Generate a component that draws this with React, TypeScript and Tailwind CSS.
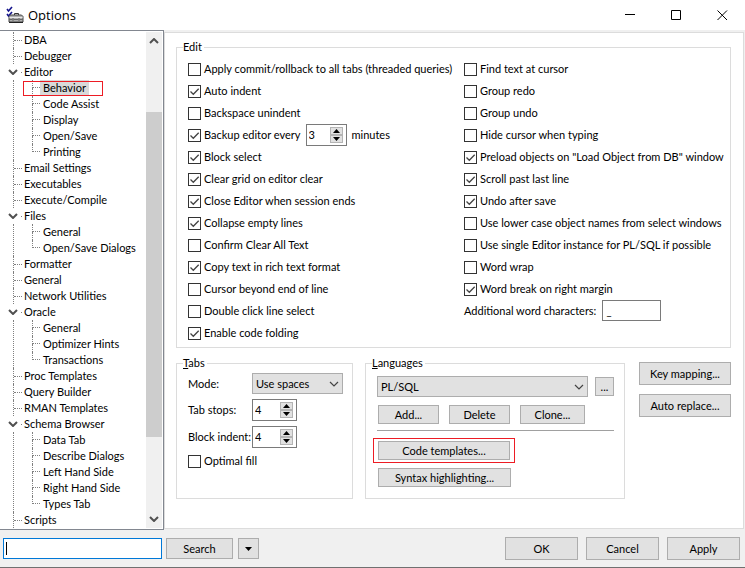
import { useId, useState } from "react";
import type { ReactNode } from "react";

type Node = { label: string; children?: string[] };

const tree: Node[] = [
  { label: "DBA" },
  { label: "Debugger" },
  { label: "Editor", children: ["Behavior", "Code Assist", "Display", "Open/Save", "Printing"] },
  { label: "Email Settings" },
  { label: "Executables" },
  { label: "Execute/Compile" },
  { label: "Files", children: ["General", "Open/Save Dialogs"] },
  { label: "Formatter" },
  { label: "General" },
  { label: "Network Utilities" },
  { label: "Oracle", children: ["General", "Optimizer Hints", "Transactions"] },
  { label: "Proc Templates" },
  { label: "Query Builder" },
  { label: "RMAN Templates" },
  {
    label: "Schema Browser",
    children: ["Data Tab", "Describe Dialogs", "Left Hand Side", "Right Hand Side", "Types Tab"],
  },
  { label: "Scripts" },
];

const leftOptions: [string, boolean][] = [
  ["Apply commit/rollback to all tabs (threaded queries)", false],
  ["Auto indent", true],
  ["Backspace unindent", false],
  ["Backup editor every", true],
  ["Block select", true],
  ["Clear grid on editor clear", true],
  ["Close Editor when session ends", true],
  ["Collapse empty lines", true],
  ["Confirm Clear All Text", false],
  ["Copy text in rich text format", true],
  ["Cursor beyond end of line", false],
  ["Double click line select", false],
  ["Enable code folding", true],
];

const rightOptions: [string, boolean][] = [
  ["Find text at cursor", false],
  ["Group redo", false],
  ["Group undo", false],
  ["Hide cursor when typing", false],
  ['Preload objects on "Load Object from DB" window', true],
  ["Scroll past last line", true],
  ["Undo after save", true],
  ["Use lower case object names from select windows", false],
  ["Use single Editor instance for PL/SQL if possible", false],
  ["Word wrap", false],
  ["Word break on right margin", true],
];

function Chevron({ className, up = false, bold = false }: { className: string; up?: boolean; bold?: boolean }) {
  return (
    <svg viewBox="0 0 10 6" className={className} fill="none" stroke="currentColor" strokeWidth={bold ? 2 : 1.2} aria-hidden="true">
      <path d={up ? "M1 5l4-4 4 4" : "M1 1l4 4 4-4"} />
    </svg>
  );
}

function Check({ label, checked }: { label: string; checked: boolean }) {
  return (
    <label className="flex h-[22px] items-center gap-[3px] whitespace-nowrap">
      <span className="grid">
        <input
          type="checkbox"
          defaultChecked={checked}
          className="peer col-start-1 row-start-1 size-[13px] appearance-none border border-[#333333] bg-white"
        />
        <svg
          viewBox="0 0 13 13"
          className="pointer-events-none invisible col-start-1 row-start-1 size-[13px] peer-checked:visible"
          fill="none"
          stroke="#444444"
          strokeWidth="1.3"
          aria-hidden="true"
        >
          <path d="M2.5 6.5l2.8 2.8 5.4-5.6" />
        </svg>
      </span>
      {label}
    </label>
  );
}

function Spinner({ id, initial, label, narrow = false }: { id?: string; initial: number; label?: string; narrow?: boolean }) {
  const [value, setValue] = useState(initial);
  const step = "grid h-[8px] w-[13px] place-items-center border border-[#b4b4b4] bg-[#e1e1e1]";
  return (
    <span className={`flex h-[22px] items-center border border-[#7a7a7a] bg-white pr-[3px] pl-[2px] ${narrow ? "w-[41px]" : "w-[45px]"}`}>
      <input
        id={id}
        aria-label={label}
        value={value}
        onChange={(e) => setValue(Number(e.target.value) || 0)}
        className="h-[16px] w-0 min-w-0 flex-1 bg-transparent outline-none"
      />
      <span className="flex flex-col">
        <button aria-label="Increase" className={step} onClick={() => setValue(value + 1)}>
          <svg viewBox="0 0 7 4" className="h-[4px] w-[7px]" aria-hidden="true">
            <path d="M3.5 0L7 4H0z" />
          </svg>
        </button>
        <button aria-label="Decrease" className={step} onClick={() => setValue(value - 1)}>
          <svg viewBox="0 0 7 4" className="h-[4px] w-[7px]" aria-hidden="true">
            <path d="M3.5 4L7 0H0z" />
          </svg>
        </button>
      </span>
    </span>
  );
}

function Dropdown({ id, label, options, className }: { id?: string; label?: string; options: string[]; className: string }) {
  return (
    <span className={`grid items-center ${className}`}>
      <select
        id={id}
        aria-label={label}
        className="col-start-1 row-start-1 h-[21px] w-full appearance-none border border-[#adadad] bg-[#e1e1e1] pr-[16px] pl-[3px]"
      >
        {options.map((o) => (
          <option key={o}>{o}</option>
        ))}
      </select>
      <Chevron className="pointer-events-none col-start-1 row-start-1 mr-[4px] h-[6px] w-[10px] justify-self-end text-[#444444]" />
    </span>
  );
}

function Button({ children, className, label }: { children: ReactNode; className: string; label?: string }) {
  return (
    <button aria-label={label} className={`flex items-center justify-center border border-[#adadad] bg-[#e1e1e1] whitespace-nowrap ${className}`}>
      {children}
    </button>
  );
}

function Group({ title, className, children }: { title: ReactNode; className: string; children: ReactNode }) {
  return (
    <fieldset className={`min-w-0 border border-[#dcdcdc] ${className}`}>
      <legend className="ml-[6px] h-[16px] pr-[2px]">{title}</legend>
      {children}
    </fieldset>
  );
}

function Tree() {
  return (
    <ul role="tree" aria-label="Option categories" className="min-w-0 flex-1">
      {tree.map((node) => (
        <li key={node.label} role="treeitem" aria-expanded={node.children ? true : undefined}>
          <div className="flex h-[16px] items-center whitespace-nowrap">
            {node.children ? (
              <>
                <Chevron bold className="ml-[8px] h-[6px] w-[10px] text-[#505050]" />
                <span className="mr-[2px] ml-[3px] w-px border-t border-[#808080]" />
              </>
            ) : (
              <span className="mr-[2px] ml-[13px] flex h-full w-[9px] items-center border-l border-dotted border-[#808080]">
                <span className="w-full border-t border-dotted border-[#808080]" />
              </span>
            )}
            {node.label}
          </div>
          {node.children && (
            <ul role="group" className="ml-[13px] border-l border-dotted border-[#808080] pl-[18px]">
              {node.children.map((child, i) => (
                <li key={child} role="treeitem" className="relative flex h-[16px] items-center whitespace-nowrap">
                  <span className="flex h-full w-[8px] flex-col">
                    <span className="h-[8px] border-b border-l border-dotted border-[#808080]" />
                    <span className={i < node.children!.length - 1 ? "h-[8px] border-l border-dotted border-[#808080]" : "h-[8px]"} />
                  </span>
                  <span className={child === "Behavior" ? "bg-[#d9d9d9] px-[3px]" : "px-[3px]"}>{child}</span>
                  {child === "Behavior" && <span className="absolute top-px -left-[9px] h-[15px] w-[80px] border border-[#ed1c24]" />}
                </li>
              ))}
            </ul>
          )}
        </li>
      ))}
    </ul>
  );
}

export default function App() {
  const id = useId();
  return (
    <div className="flex min-h-screen flex-col border-b border-[#707070] bg-[#f0f0f0] font-['Lato','Noto_Sans',sans-serif] text-[11px] leading-[16px] text-black">
      <header className="flex h-[30px] items-center bg-white pr-[17px] pl-[6px]">
        <svg viewBox="0 0 18 18" className="size-[18px]" aria-hidden="true">
          <path d="M1 3l1.500 2L6 1M1 8l1.500 2L6 6" fill="none" stroke="#14148c" strokeWidth="1.6" />
          <path d="M8.500 9V7.500h4V9" fill="none" stroke="#333" />
          <path d="M3 10.500l1.500-1.500h11l1.500 1.500v5.500H3z" fill="#b0b0b0" stroke="#444" />
          <path d="M3.500 11.500h13" stroke="#e8e8e8" />
          <path d="M3 13.500h14" stroke="#666" />
          <path d="M3 16.500h14" stroke="#222" />
          <path d="M6.500 12.500h1v2h-1zM12.500 12.500h1v2h-1z" fill="#eee" stroke="#555" strokeWidth=".6" />
        </svg>
        <h1 className="ml-[4px] font-['Open_Sans','Noto_Sans',sans-serif] text-[13px] leading-[20px]">Options</h1>
        <div className="ml-auto flex gap-[35px]">
          <button aria-label="Minimize">
            <svg viewBox="0 0 11 11" className="size-[11px]" stroke="black" aria-hidden="true">
              <path d="M0 4.500h10" />
            </svg>
          </button>
          <button aria-label="Maximize">
            <svg viewBox="0 0 11 11" className="size-[11px]" stroke="black" fill="none" aria-hidden="true">
              <path d="M.5.5h9v9h-9z" />
            </svg>
          </button>
          <button aria-label="Close">
            <svg viewBox="0 0 11 11" className="size-[11px]" stroke="black" aria-hidden="true">
              <path d="M.5.5l9.500 9.500M10 .5L.5 10" />
            </svg>
          </button>
        </div>
      </header>

      <div className="flex flex-1">
        <nav className="flex w-[164px] shrink-0 border-y border-r border-[#828790] bg-white py-px pr-px">
          <Tree />
          <div className="flex w-[16px] flex-col items-center bg-[#f0f0f0] py-[6px] text-[#505050]">
            <Chevron up bold className="h-[6px] w-[10px]" />
            <div className="mt-[68px] h-[325px] w-full bg-[#cdcdcd]" />
            <Chevron bold className="mt-auto h-[6px] w-[10px]" />
          </div>
        </nav>

        <main className="mt-[2px] mr-px mb-px flex min-w-0 flex-1 flex-col gap-[7px] border border-[#dcdcdc] bg-white pt-[6px] pr-[12px] pl-[11px]">
          <Group title="Edit" className="flex pb-[3px]">
            <div className="flex pt-[3px] pl-[11px]">
              <div className="w-[276px]">
                {leftOptions.map(([label, checked]) =>
                  label === "Backup editor every" ? (
                    <div key={label} className="flex items-center gap-[5px]">
                      <Check label={label} checked={checked} />
                      <Spinner narrow initial={3} label="Backup interval in minutes" />
                      <span>minutes</span>
                    </div>
                  ) : (
                    <Check key={label} label={label} checked={checked} />
                  ),
                )}
              </div>
              <div>
                {rightOptions.map(([label, checked]) => (
                  <Check key={label} label={label} checked={checked} />
                ))}
                <div className="flex items-center gap-[6px]">
                  <label htmlFor={`${id}-chars`}>Additional word characters:</label>
                  <input id={`${id}-chars`} defaultValue="_" className="h-[21px] w-[59px] border border-[#7a7a7a] bg-white px-[3px]" />
                </div>
              </div>
            </div>
          </Group>

          <div className="flex items-start">
            <Group title={<><u>T</u>abs</>} className="h-[144px] w-[177px] shrink-0">
              <div className="flex flex-col gap-[5px] pt-[2px] pr-[9px] pl-[11px]">
                <div className="flex items-center">
                  <label htmlFor={`${id}-mode`} className="w-[64px]">Mode:</label>
                  <Dropdown id={`${id}-mode`} options={["Use spaces", "Use tabs"]} className="flex-1" />
                </div>
                <div className="flex items-center">
                  <label htmlFor={`${id}-stops`} className="w-[64px] whitespace-nowrap">Tab stops:</label>
                  <Spinner id={`${id}-stops`} initial={4} />
                </div>
                <div className="flex items-center">
                  <label htmlFor={`${id}-indent`} className="w-[64px] whitespace-nowrap">Block indent:</label>
                  <Spinner id={`${id}-indent`} initial={4} />
                </div>
                <div className="-mt-[3px]">
                  <Check label="Optimal fill" checked={false} />
                </div>
              </div>
            </Group>

            <Group title={<><u>L</u>anguages</>} className="ml-[12px] h-[144px] min-w-[260px] flex-1">
              <div className="flex flex-col pt-[5px] pr-[10px] pl-[11px]">
                <div className="flex items-center gap-[7px]">
                  <Dropdown label="Language" options={["PL/SQL"]} className="flex-1" />
                  <Button className="h-[19px] w-[19px]" label="Browse languages">...</Button>
                </div>
                <div className="mt-[8px] flex gap-[10px] pl-px">
                  <Button className="h-[19px] w-[61px]">Add...</Button>
                  <Button className="h-[19px] w-[61px]">Delete</Button>
                  <Button className="h-[19px] w-[65px]">Clone...</Button>
                </div>
                <hr className="mt-[6px] border-[#a0a0a0]" />
                <div className="mt-[7px] -ml-[4px] w-[142px] border border-[#ed1c24] px-[4px] py-[2px]">
                  <Button className="h-[19px] w-full">Code templates...</Button>
                </div>
                <Button className="mt-[5px] ml-px h-[19px] w-[133px]">Syntax highlighting...</Button>
              </div>
            </Group>

            <div className="mt-[7px] ml-[14px] flex flex-col gap-[9px]">
              <Button className="h-[23px] w-[92px]">Key mapping...</Button>
              <Button className="h-[23px] w-[92px]">Auto replace...</Button>
            </div>
          </div>
        </main>
      </div>

      <footer className="flex h-[37px] items-center pr-[5px] pl-[3px]">
        <div className="flex h-[21px] w-[159px] items-center border border-[#0078d7] bg-white px-[2px]">
          <input
            aria-label="Search options"
            placeholder=" "
            className="peer order-2 w-0 min-w-0 flex-1 bg-transparent outline-none placeholder-shown:caret-transparent"
          />
          <span className="order-1 hidden h-[13px] w-px bg-black peer-placeholder-shown:block" />
        </div>
        <Button className="ml-[4px] h-[21px] w-[67px]">Search</Button>
        <Button className="ml-[5px] h-[21px] w-[21px]" label="Search menu">
          <svg viewBox="0 0 7 4" className="h-[4px] w-[7px]" aria-hidden="true">
            <path d="M3.500 4L7 0H0z" />
          </svg>
        </Button>
        <div className="ml-auto flex gap-[8px]">
          <Button className="h-[23px] w-[73px]">OK</Button>
          <Button className="h-[23px] w-[73px]">Cancel</Button>
          <Button className="h-[23px] w-[73px]">Apply</Button>
        </div>
      </footer>
    </div>
  );
}
